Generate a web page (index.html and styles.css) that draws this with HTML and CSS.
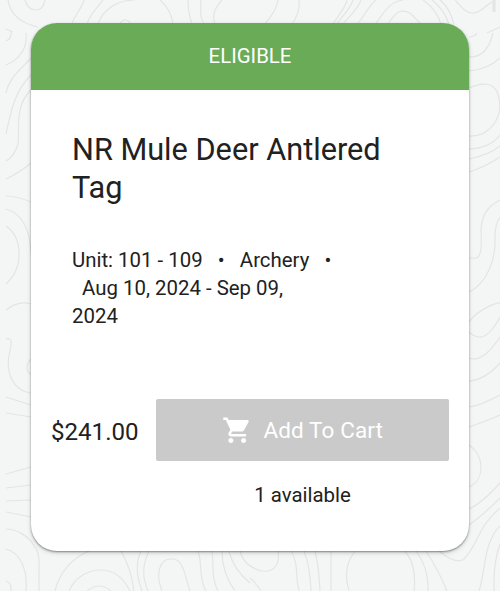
FILE: index.html
```html
<!DOCTYPE html>
<html lang="en">
<head>
  <meta charset="UTF-8" />
  <meta name="viewport" content="width=device-width, initial-scale=1.0"/>
  <title>NR Mule Deer Antlered Tag</title>
  <link rel="stylesheet" href="styles.css">
</head>
<body>

  <!-- topographic contour lines behind the card -->
  <svg class="contours" viewBox="0 0 500 591" aria-hidden="true">
    <!-- top -->
    <path d="M8 0C10 14 20 23 38 27M25 0C27 7 31 10 36 10S44 6 45 0"/>
    <path d="M6 29L13 32M11 31Q12 39 6 41M26 33C28 48 19 60 6 65M31 58C20 70 9 78 6 93M31 75C14 92 11 112 6 134M31 90C14 106 20 130 18 144Q14 157 6 161"/>
    <path d="M84 0C82 9 74 15 72 24M103 0C97 8 90 14 87 24M98 24C103 9 118 0 135 0M120 24Q122 19 126 20T130 24M160 0C168 7 172 15 173 24M188 0Q188 13 192 24M201 0C201 9 199 16 204 24M222 0C214 9 212 15 215 24M278 0C277 9 271 17 265 24M299 0C300 8 297 17 292 24"/>
    <path d="M347 0C345 9 337 17 333 24M353 0C350 10 341 17 337 24M361 0C357 11 348 17 343 24M376 0C367 7 364 18 357 24M375 24C383 16 387 2 403 0M388 24C397 10 402 9 410 13L421 24M423 0C432 6 438 15 441 24M432 0C441 7 446 15 449 24M440 0C448 6 451 15 454 24M455 0C462 8 467 14 474 13S485 6 492 2"/>
    <path d="M494 0V12" stroke-width="3"/>
    <!-- left -->
    <path d="M6 179Q19 173 31 163M6 196Q17 196 31 202M6 209C20 213 30 225 31 254M6 226C23 238 24 268 6 284M6 310Q19 300 31 304M6 339C14 337 11 346 9 355C6 371 12 391 31 393M31 359Q23 368 31 375M6 397L31 405M6 413L31 417M6 474L31 467M6 488L31 485M6 501L31 500M6 512L31 517"/>
    <path d="M6 529C17 529 30 537 34 546Q40 551 39 570V591M6 549C19 552 28 568 26 591M6 581Q12 583 11 591"/>
    <!-- bottom -->
    <path d="M55 591C59 573 72 558 89 551M69 591C75 577 88 570 101 570S123 577 130 591M87 591Q99 581 111 591M121 551C128 563 132 575 134 591M141 551C135 565 137 577 142 591M149 551C141 567 143 580 148 591M162 591C155 573 160 559 171 559C184 558 185 577 190 591M198 551C203 565 198 577 206 591M212 551C214 566 211 578 218 591M222 551Q222 573 235 591M229 551Q233 569 250 583M240 551Q244 567 262 571C275 573 280 563 278 551M250 578Q257 584 261 591M291 551C299 564 295 576 299 591M304 551Q310 566 311 591M315 551Q319 567 320 591M331 551V591M355 551C345 564 345 578 349 591M405 551Q417 565 414 591M416 551Q429 568 428 591M426 551Q439 571 447 591"/>
    <!-- right -->
    <path d="M469 37Q475 37 477 33M487 33L500 27M469 57Q487 58 493 33M469 71Q489 69 500 58M469 88C482 82 494 82 498 94C505 118 489 137 469 136M469 149Q490 148 500 135M469 159Q489 155 500 146M469 172Q485 167 500 157M500 200C486 207 482 216 481 230C482 247 481 259 475 258H469M500 217Q495 224 495 237C496 260 487 283 469 292"/>
    <path d="M469 322C478 309 500 300 504 304C502 320 487 339 479 337Q473 336 469 332M469 358C482 363 493 347 500 337M469 381Q485 380 500 363M469 407Q479 406 500 395M469 427Q484 422 500 415M469 445C485 456 485 480 469 487M469 509Q482 503 500 483M469 525Q482 516 500 498M439 551Q456 565 464 559C477 547 478 526 500 508M479 591C486 570 483 543 500 526M494 591Q493 563 500 544"/>
  </svg>

  <div class="card">
    <div class="card-status">ELIGIBLE</div>

    <div class="card-body">
      <h2>NR Mule Deer Antlered Tag</h2>
      <p class="details">Unit: 101 - 109 &nbsp;&nbsp;•&nbsp;&nbsp; Archery &nbsp;&nbsp;•<br>&nbsp; Aug 10, 2024 - Sep 09,<br>2024</p>
    </div>

    <div class="card-actions">
      <span class="price">$241.00</span>
      <div class="purchase">
        <button class="cart-btn" type="button" disabled>
          <svg class="cart-icon" viewBox="0 0 24 24" aria-hidden="true">
            <path d="M7 18c-1.100 0-1.990.900-1.990 2S5.900 22 7 22s2-.900 2-2-.900-2-2-2zM1 2v2h2l3.600 7.590-1.350 2.450c-.160.280-.250.610-.250.960 0 1.100.900 2 2 2h12v-2H7.420c-.140 0-.250-.110-.250-.250l.030-.120.900-1.630h7.450c.750 0 1.410-.410 1.750-1.030l3.580-6.490c.080-.140.120-.310.120-.480 0-.550-.450-1-1-1H5.210l-.940-2H1zm16 16c-1.100 0-1.990.900-1.990 2s.890 2 1.990 2 2-.900 2-2-.900-2-2-2z"/>
          </svg>
          <span>Add To Cart</span>
        </button>
        <p class="available">1 available</p>
      </div>
    </div>
  </div>

</body>
</html>
```

FILE: styles.css
```css
body {
  margin: 0;
  min-height: 591px;
  box-sizing: border-box;
  padding: 23px 31px 0;
  font-family: Roboto, sans-serif;
  background-color: #f4f6f5;
  color: #212121;
  overflow: hidden;
}

.contours {
  position: absolute;
  top: 0;
  left: 0;
  z-index: -1;
  width: 500px;
  height: 591px;
  fill: none;
  stroke: #e3e5e4;
  stroke-width: 1.2;
}

.card {
  height: 527.5px;
  background: #fff;
  border-radius: 26px;
  overflow: hidden;
  box-shadow: 0 1px 2px rgba(0, 0, 0, 0.4), 0 2px 5px rgba(0, 0, 0, 0.14);
}

.card-status {
  height: 67px;
  line-height: 67px;
  background-color: #6aab58;
  color: #fff;
  font-size: 20.4px;
  text-align: center;
}

.card-body {
  height: 309px;
  box-sizing: border-box;
  padding: 41px 41px 0;
}

h2 {
  margin: 0 0 40px;
  font-size: 30.7px;
  line-height: 37.5px;
  font-weight: 400;
}

.details {
  margin: 0;
  font-size: 20.4px;
  line-height: 28.2px;
  white-space: nowrap;
}

.card-actions {
  display: flex;
  justify-content: space-between;
  padding: 0 20px;
}

.price {
  font-size: 24.1px;
  line-height: 66px;
}

.purchase {
  width: 293px;
}

.cart-btn {
  display: flex;
  align-items: center;
  justify-content: center;
  gap: 11px;
  width: 100%;
  height: 62px;
  padding: 0;
  border: none;
  border-radius: 2px;
  background-color: #cacaca;
  color: #fff;
  font-family: inherit;
  font-size: 22.5px;
  letter-spacing: 0.1px;
}

.cart-icon {
  width: 30.5px;
  height: 30.5px;
  fill: currentColor;
}

.available {
  margin: 20px 0 0;
  font-size: 20.4px;
  line-height: 28px;
  text-align: center;
}
```
